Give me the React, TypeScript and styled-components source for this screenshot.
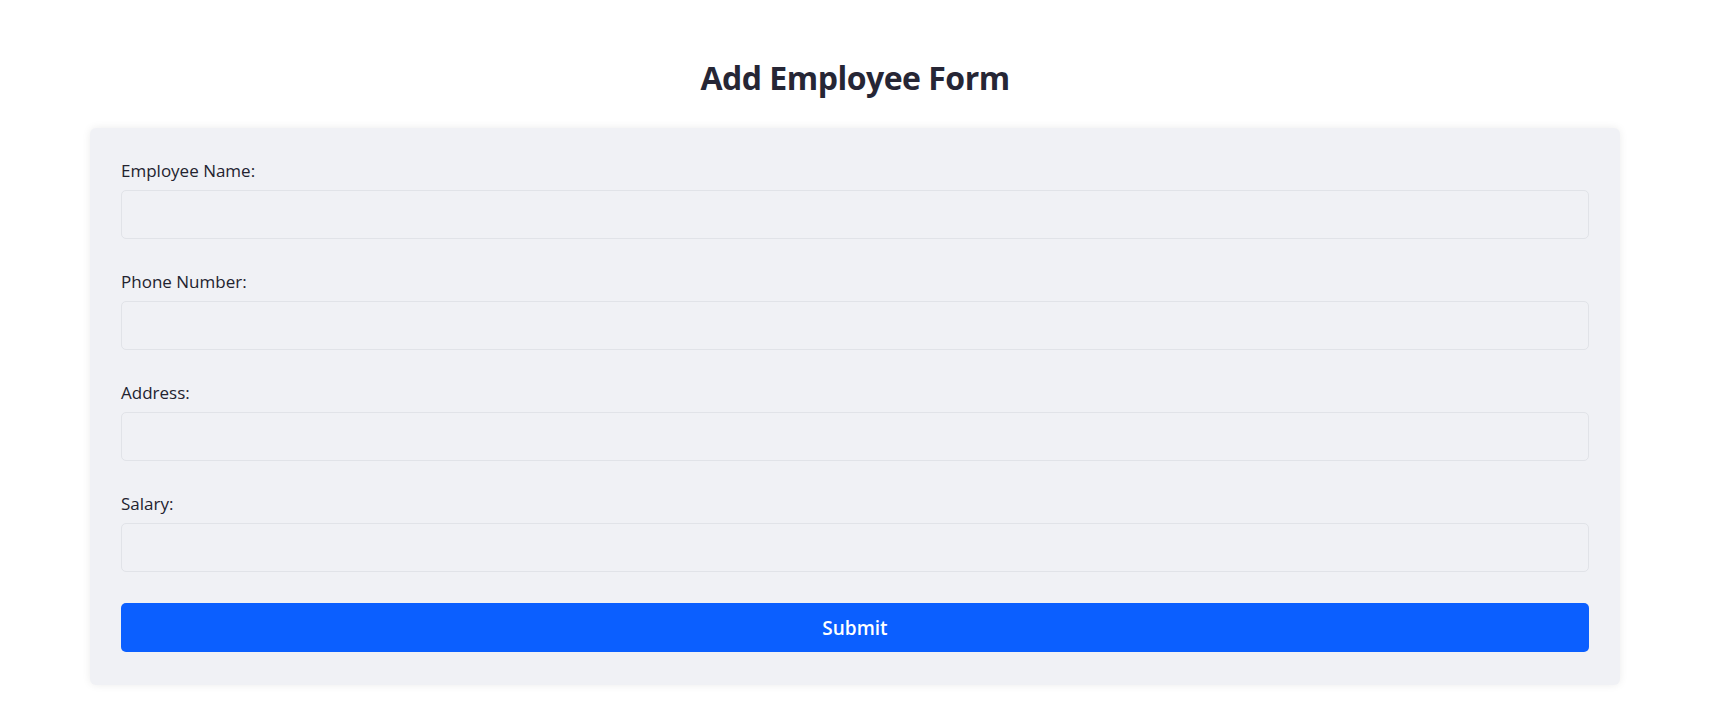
import React from "react";
import styled, { createGlobalStyle } from "styled-components";

const GlobalStyle = createGlobalStyle`
  * { box-sizing: border-box; }
  body {
    margin: 0;
    background: #ffffff;
    font-family: "Open Sans", "Noto Sans", "Liberation Sans", sans-serif;
    color: #262635;
  }
`;

const Page = styled.div`
  padding: 56px 90px 19px;
  display: flex;
  flex-direction: column;
  align-items: center;
`;

const Title = styled.h2`
  margin: 0 0 28px;
  font-size: 32px;
  line-height: 44px;
  font-weight: 700;
  color: #262635;
  letter-spacing: -0.5px;
`;

const Card = styled.form`
  width: 100%;
  background: #f0f1f5;
  border-radius: 6px;
  box-shadow: 0 0 8px rgba(0, 0, 0, 0.08);
  padding: 30px 31px 33px;
  display: flex;
  flex-direction: column;
`;

const Field = styled.div`
  display: flex;
  flex-direction: column;
  gap: 6px;
  margin-bottom: 30px;
  &:last-of-type {
    margin-bottom: 31px;
  }
`;

const Label = styled.label`
  font-size: 17px;
  line-height: 26px;
  font-weight: 500;
  color: #23232f;
`;

const Input = styled.input`
  height: 49px;
  width: 100%;
  border: 1px solid #e1e3e8;
  border-radius: 5px;
  background: #f0f1f5;
  padding: 0 12px;
  font-size: 16px;
  font-family: inherit;
  outline: none;
`;

const SubmitButton = styled.button`
  height: 49px;
  width: 100%;
  border: none;
  border-radius: 5px;
  background: #0b5fff;
  color: #ffffff;
  font-family: inherit;
  font-size: 19px;
  font-weight: 600;
  cursor: pointer;
`;

const fields = [
  { id: "name", label: "Employee Name:", type: "text" },
  { id: "phone", label: "Phone Number:", type: "tel" },
  { id: "address", label: "Address:", type: "text" },
  { id: "salary", label: "Salary:", type: "number" },
];

export default function App() {
  return (
    <>
      <GlobalStyle />
      <Page>
        <Title>Add Employee Form</Title>
        <Card onSubmit={(e) => e.preventDefault()}>
          {fields.map((f) => (
            <Field key={f.id}>
              <Label htmlFor={f.id}>{f.label}</Label>
              <Input id={f.id} type={f.type} />
            </Field>
          ))}
          <SubmitButton type="submit">Submit</SubmitButton>
        </Card>
      </Page>
    </>
  );
}
